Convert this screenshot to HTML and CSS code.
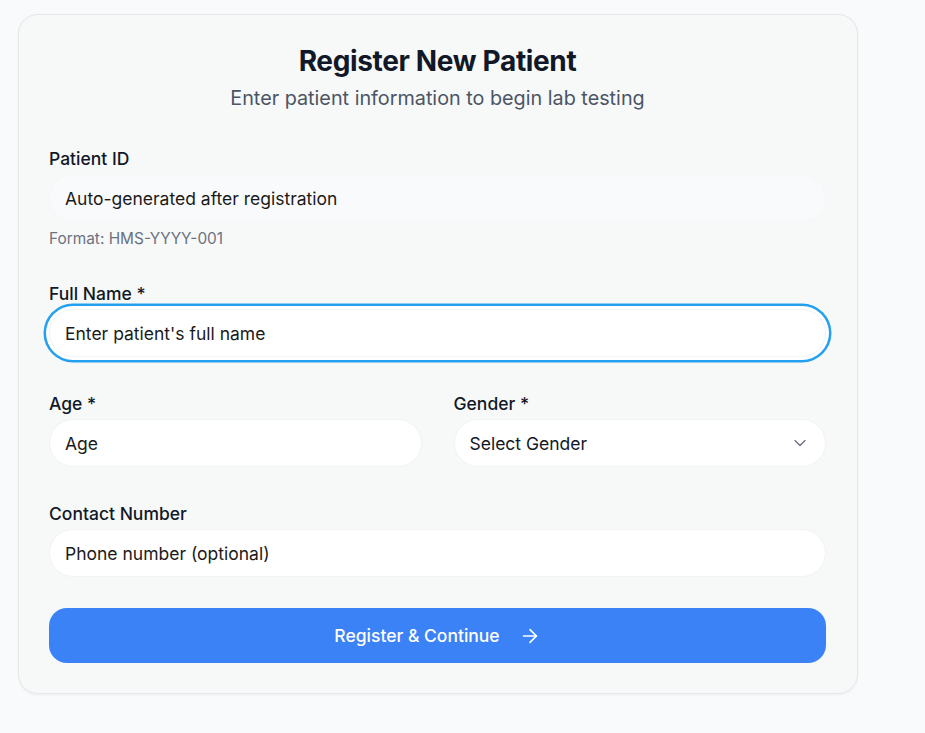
FILE: index.html
```html
<!DOCTYPE html>
<html lang="en">
<head>
<meta charset="utf-8">
<title>Register New Patient</title>
<link rel="stylesheet" href="styles.css">
</head>
<body>
<div class="card">
  <header class="card-head">
    <h1 class="title">Register New Patient</h1>
    <p class="subtitle">Enter patient information to begin lab testing</p>
  </header>
  <form class="form">
    <div class="field">
      <label class="label">Patient ID</label>
      <input class="input input-readonly" type="text" placeholder="Auto-generated after registration" readonly>
      <span class="hint">Format: HMS-YYYY-001</span>
    </div>
    <div class="field">
      <label class="label">Full Name *</label>
      <input class="input input-focus" type="text" placeholder="Enter patient's full name" autofocus>
    </div>
    <div class="row">
      <div class="field">
        <label class="label">Age *</label>
        <input class="input" type="text" placeholder="Age">
      </div>
      <div class="field">
        <label class="label">Gender *</label>
        <div class="select-wrap">
          <select class="input select">
            <option>Select Gender</option>
          </select>
          <svg class="chevron" width="20" height="20" viewBox="0 0 24 24" fill="none" stroke="#6b7280" stroke-width="1.6" stroke-linecap="round" stroke-linejoin="round"><path d="M6 9l6 6 6-6"/></svg>
        </div>
      </div>
    </div>
    <div class="field">
      <label class="label">Contact Number</label>
      <input class="input" type="text" placeholder="Phone number (optional)">
    </div>
    <button class="btn" type="button">
      <span>Register &amp; Continue</span>
      <svg width="22" height="22" viewBox="0 0 24 24" fill="none" stroke="#fff" stroke-width="1.8" stroke-linecap="round" stroke-linejoin="round"><path d="M5 12h14"/><path d="M12 5l7 7-7 7"/></svg>
    </button>
  </form>
</div>
</body>
</html>
```

FILE: styles.css
```css
* { box-sizing: border-box; }
html, body { margin: 0; }
body {
  background: #f9fafb;
  padding: 14px 18px;
  font-family: Inter, "Noto Sans", "Liberation Sans", sans-serif;
  color: #111827;
}
.card {
  width: 840px;
  background: #f7f8f8;
  border: 1px solid #e5e7eb;
  border-radius: 20px;
  box-shadow: 0 1px 3px rgba(0,0,0,0.05);
  padding: 28px 31px 30px 30px;
}
.card-head { text-align: center; }
.title {
  margin: 0;
  font-size: 28px;
  line-height: 36px;
  font-weight: 700;
  letter-spacing: -0.35px;
  color: #111827;
}
.subtitle {
  margin: 5px 0 0;
  font-size: 19.8px;
  line-height: 28px;
  color: #4b5563;
}
.form {
  margin-top: 35px;
  display: flex;
  flex-direction: column;
  gap: 33px;
}
.field {
  display: flex;
  flex-direction: column;
}
.label {
  font-size: 17.5px;
  line-height: 24px;
  font-weight: 500;
  color: #111827;
  margin-bottom: 3px;
}
.input {
  height: 48px;
  width: 100%;
  border: 1px solid #f1f3f4;
  border-radius: 24px;
  background: #fff;
  padding: 0 15px;
  font-family: inherit;
  font-size: 17.5px;
  color: #111827;
  outline: none;
}
.input::placeholder { color: #1a1a1a; opacity: 1; }
.input-readonly { background: #f9fafb; border-color: #f6f7f8; }
.input-focus {
  box-shadow: 0 0 0 3px #fff, 0 0 0 5.5px #25a0ee;
}
.hint {
  margin-top: 7px;
  font-size: 15.4px;
  line-height: 20px;
  color: #6b7280;
}
.row {
  display: grid;
  grid-template-columns: 1fr 1fr;
  gap: 32px;
  margin-top: 2px;
  margin-bottom: 2px;
}
.select-wrap { position: relative; }
.select {
  appearance: none;
  -webkit-appearance: none;
  color: #111827;
}
.chevron {
  position: absolute;
  right: 16px;
  top: 14px;
  pointer-events: none;
}
.btn {
  margin-top: -2px;
  height: 55px;
  width: 100%;
  border: none;
  border-radius: 18px;
  background: #3b82f6;
  color: #fff;
  font-family: inherit;
  font-size: 17.5px;
  font-weight: 500;
  display: flex;
  align-items: center;
  justify-content: center;
  gap: 19px;
}
```
